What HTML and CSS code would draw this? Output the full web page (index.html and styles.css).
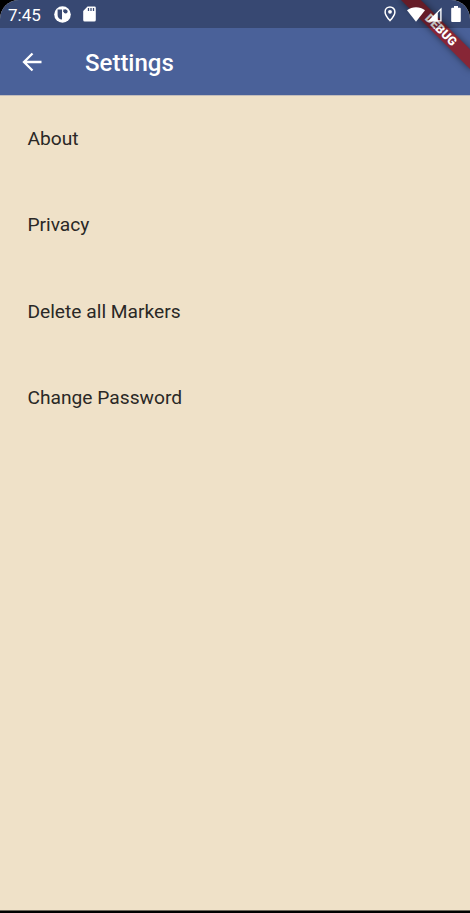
FILE: index.html
```html
<!DOCTYPE html>
<html lang="en">
<head>
<meta charset="utf-8">
<title>Settings</title>
<link rel="stylesheet" href="styles.css">
</head>
<body>
<div class="screen">
  <div class="debug-banner"><span>DEBUG</span></div>
  <div class="status-bar">
    <span class="clock">7:45</span>
    <svg class="app-icon" width="17" height="17" viewBox="0 0 17 17"><circle cx="8.500" cy="8.500" r="8.300" fill="#fff"/><path d="M3.600 3.500h4.400v10a4.400 4.400 0 0 1-4.400-4.500z" fill="#3a4a73"/><path d="M9.300 3.500h2.500v2.500H9.300z" fill="#3a4a73"/><circle cx="11.600" cy="5.600" r="2" fill="#3a4a73"/></svg>
    <svg class="sd-icon" width="13" height="16" viewBox="0 0 13 16"><path d="M4.500.5H11.500a1.300 1.300 0 0 1 1.300 1.300V14a1.500 1.500 0 0 1-1.500 1.500H1.700A1.500 1.500 0 0 1 .2 14V5z" fill="#fff"/><path d="M5.500 2v3M8 2v3M10.500 2v3" stroke="#3a4a73" stroke-width="1.300"/></svg>
    <span class="spacer"></span>
    <svg class="pin-icon" width="12" height="16" viewBox="0 0 12 16"><path d="M6 1C3.200 1 1.100 3.100 1.100 5.900 1.100 9.300 6 14.600 6 14.600s4.900-5.300 4.900-8.700C10.900 3.100 8.800 1 6 1z" fill="none" stroke="#fff" stroke-width="1.500"/><circle cx="6" cy="5.800" r="1.900" fill="#fff"/></svg>
    <svg class="wifi-icon" width="18" height="15" viewBox="0 0 18 15"><path d="M0 3.300C5-.8 13-.8 18 3.300L9 14.800z" fill="#fff"/></svg>
    <svg class="signal-icon" width="15" height="15" viewBox="0 0 15 15"><path fill-rule="evenodd" d="M.5 14.600 14.600.5V14.600zM10.800 6V13.300H13.200V3.600z" fill="#fff"/></svg>
    <svg class="battery-icon" width="10" height="16" viewBox="0 0 10 16"><path d="M3 0h4v1.700h1.800q1 0 1 1V15q0 .9-1 .9H1.200q-1 0-1-.9V2.700q0-1 1-1H3z" fill="#fff"/></svg>
  </div>
  <header class="app-bar">
    <svg class="back" width="20" height="20" viewBox="0 0 20 20"><path d="M19.500 10H2.200M10.500 1.500 2 10l8.500 8.500" fill="none" stroke="#fff" stroke-width="2.300"/></svg>
    <h1>Settings</h1>
  </header>
  <main class="list">
    <div class="item">About</div>
    <div class="item">Privacy</div>
    <div class="item">Delete all Markers</div>
    <div class="item">Change Password</div>
  </main>
</div>
</body>
</html>
```
FILE: styles.css
```css
* { box-sizing: border-box; }
body { margin: 0; background: #000; font-family: Roboto, sans-serif; }
.screen {
  position: relative;
  display: flex;
  flex-direction: column;
  height: 911px;
  overflow: hidden;
  background: #efe1c8;
  border-radius: 19px 19px 0 0;
  border-bottom: 1px solid #6f685b;
}
.status-bar {
  position: relative;
  z-index: 2;
  display: flex;
  flex: none;
  align-items: center;
  height: 28px;
  padding: 0 9px 0 8px;
  background: rgba(0, 0, 0, .25);
  color: #fff;
}
.screen::before {
  content: "";
  position: absolute;
  top: 0;
  left: 0;
  right: 0;
  height: 28px;
  background: #4a6199;
}
.clock { width: 33px; font-size: 17px; line-height: 28px; padding-top: 2px; }
.app-icon { margin-left: 13px; }
.sd-icon { margin-left: 12px; }
.spacer { flex: 1; }
.pin-icon { margin-right: 11px; }
.wifi-icon { margin-right: 2px; }
.signal-icon { margin-right: 9px; }
.app-bar {
  display: flex;
  flex: none;
  align-items: center;
  height: 67px;
  padding-left: 22px;
  background: #4a6199;
}
.back { margin-right: 43px; }
.app-bar h1 {
  margin: 3px 0 0;
  color: #fff;
  font-size: 24px;
  font-weight: 500;
}
.list { flex: 1; border-top: 1px solid #c3bdbb; }
.item {
  display: flex;
  align-items: center;
  height: 86.300px;
  padding: 0 0 1px 27.400px;
  color: #2a2826;
  font-size: 19.200px;
  letter-spacing: .01px;
}
.debug-banner {
  position: absolute;
  z-index: 1;
  left: 391px;
  top: 22.500px;
  width: 100px;
  height: 13.500px;
  display: flex;
  align-items: center;
  justify-content: center;
  background: #872636;
  box-shadow: 0 0 7px rgba(0, 0, 0, .5);
  transform: rotate(45deg);
  color: #fff;
  font-size: 12.200px;
  font-weight: 900;
}
```
